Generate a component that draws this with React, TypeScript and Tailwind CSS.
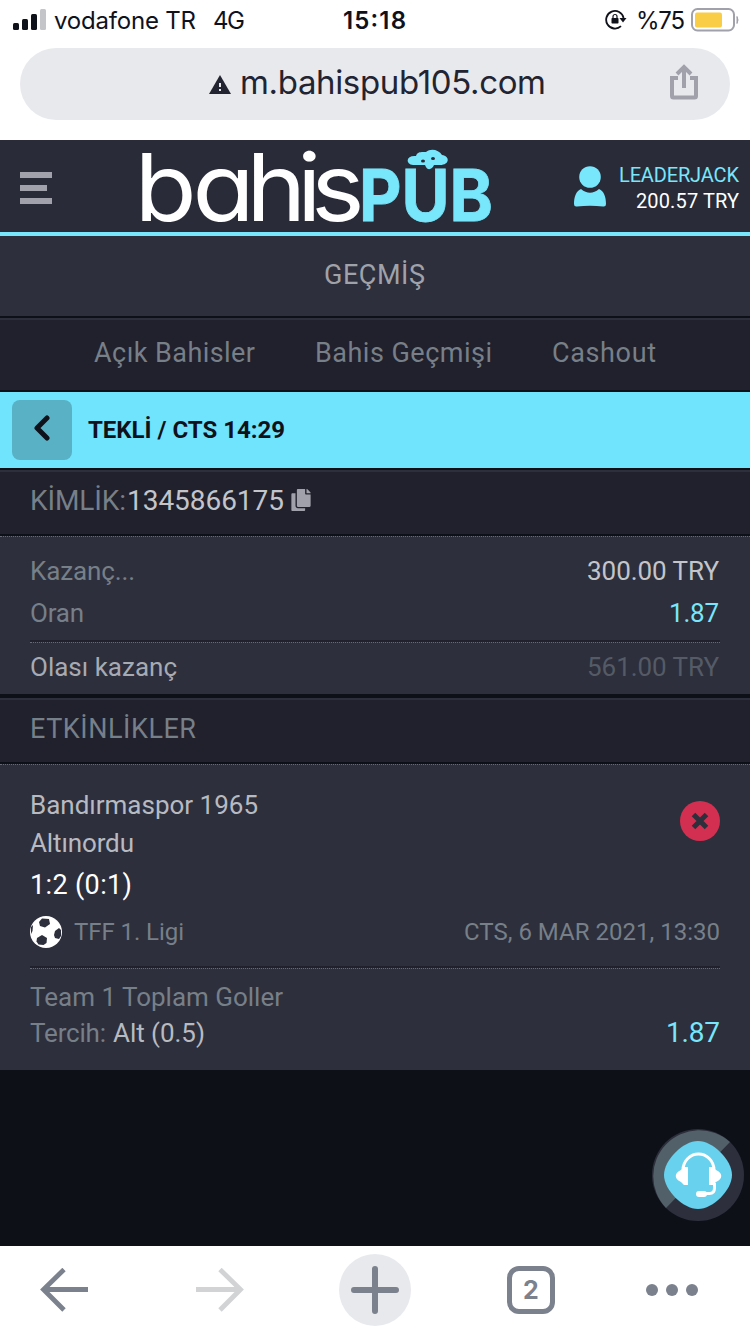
import React from "react";
import { FaCopy } from "react-icons/fa";

const tabs = [
  { id: 1, name: "Açık Bahisler", width: 161 },
  { id: 2, name: "Bahis Geçmişi", width: 177 },
  { id: 3, name: "Cashout", width: 104 },
];

// Single line of text fitted to a fixed width
const Label = ({
  text,
  width,
  size,
  weight = 400,
  font = "Roboto",
}: {
  text: string;
  width: number;
  size: number;
  weight?: number;
  font?: string;
}) => (
  <svg width={width} height={size} className="block shrink-0 overflow-visible">
    <text
      x="0"
      y={size * 0.86}
      fill="currentColor"
      fontFamily={`${font}, sans-serif`}
      fontSize={size}
      fontWeight={weight}
      textLength={width}
    >
      {text}
    </text>
  </svg>
);

const StatusBar = () => (
  <div className="flex h-10 items-center text-[#10121b]">
    <svg width="34" height="22" viewBox="0 0 34 22" className="ml-[13px] shrink-0">
      <rect x="0" y="14" width="6" height="7" rx="1.5" fill="#10121b" />
      <rect x="9" y="10" width="6" height="11" rx="1.5" fill="#10121b" />
      <rect x="18" y="5" width="6" height="16" rx="1.5" fill="#10121b" />
      <rect x="27" y="0" width="6" height="21" rx="1.5" fill="#c4c5c8" />
    </svg>
    <div className="ml-[7px] mt-[-1px]">
      <Label text="vodafone TR" width={142} size={24} font="Inter" />
    </div>
    <div className="ml-[17px] mt-[-1px]">
      <Label text="4G" width={32} size={24} font="Inter" />
    </div>
    <div className="ml-[98px] mt-[-1px]">
      <Label text="15:18" width={63} size={24} weight={600} font="Inter" />
    </div>
    <svg width="22" height="22" viewBox="0 0 22 22" fill="none" className="ml-[199px] shrink-0">
      <path d="M18.6 9A8.8 8.8 0 1 0 16 17.200" stroke="#10121b" strokeWidth="1.8" />
      <path d="M14.500 9h7l-3.500 4.500z" fill="#10121b" />
      <rect x="6.5" y="9" width="7" height="5.5" rx="0.7" fill="#10121b" />
      <path d="M8 9V7.500a2 2 0 0 1 4 0V9" stroke="#10121b" strokeWidth="1.2" />
    </svg>
    <div className="ml-[9px] mt-[-1px]">
      <Label text="%75" width={49} size={24} font="Inter" />
    </div>
    <svg width="48" height="24" viewBox="0 0 48 24" fill="none" className="ml-[6px] mt-[-1px] shrink-0">
      <rect x="1" y="1" width="42" height="21.5" rx="5.5" stroke="#a0a1aa" strokeWidth="2" />
      <rect x="4" y="4.5" width="27" height="15" rx="2" fill="#f9ce46" />
      <path d="M46 8.500q2 3.500 0 7z" fill="#a0a1aa" stroke="#a0a1aa" />
    </svg>
  </div>
);

const AddressBar = () => (
  <div className="mx-5 mt-2 flex h-[72px] items-center rounded-full bg-[#e8e9ed] text-[#222431]">
    <svg width="22" height="20" viewBox="0 0 22 20" className="ml-[189px] mt-[2px] shrink-0">
      <path d="M11 0L22 19H0z" fill="#222431" />
      <path d="M10 8h2v4h-2zM10 14h2v2h-2z" fill="#e8e9ed" />
    </svg>
    <div className="ml-[9px] mt-[-3px]">
      <Label text="m.bahispub105.com" width={306} size={33} font="Inter" />
    </div>
    <svg width="28" height="36" viewBox="0 0 28 36" fill="none" stroke="#a0a1aa" strokeWidth="4" className="ml-[124px] mt-[-5px] shrink-0">
      <path d="M8 14H2v18q0 1.500 1.500 1.500h21Q26 33.500 26 32V14h-6" />
      <path d="M14 24V3M7 10l7-7 7 7" />
    </svg>
  </div>
);

const Logo = () => (
  <svg width="352" height="80" viewBox="0 0 352 80" className="ml-[89px] shrink-0 overflow-visible">
    <text
      x="-7 46.800 96.500 143.500 156.500"
      y="75"
      fill="#fff"
      fontFamily="Inter, sans-serif"
      fontSize="94"
      fontWeight="400"
      transform="scale(1.08 1)"
      style={{ fontFeatureSettings: "'cv11'" }}
    >
      bahis
    </text>
    <text
      x="217"
      y="75"
      fill="#78e6fb"
      stroke="#78e6fb"
      strokeWidth="0.8"
      fontFamily="Inter, sans-serif"
      fontSize="71"
      fontWeight="700"
      textLength="134"
      lengthAdjust="spacingAndGlyphs"
    >
      PUB
    </text>
    <path
      d="M271 19C263 18 264 9 274 10C275 5 281 6 284 6C289 2 297 4 300 9C308 10 308 19 298 19H292C290 24 285 25 283 19Z"
      fill="#78e6fb"
    />
    <ellipse cx="281" cy="15" rx="2" ry="1.5" fill="#292b38" />
    <ellipse cx="291" cy="12.500" rx="2" ry="1.5" fill="#292b38" />
  </svg>
);

const Header = () => (
  <header className="mt-5 flex h-24 items-center border-b-4 border-[#78e6fb] bg-[#292b38]">
    <svg width="33" height="34" viewBox="0 0 33 34" fill="#a0a1aa" className="ml-5 mt-[5px] shrink-0">
      <path d="M0 0h32v6H0zM0 13h27v6H0zM0 26h32v6H0z" />
    </svg>
    <Logo />
    <svg width="32" height="42" viewBox="0 0 32 42" fill="#78e6fb" className="ml-[80px] mt-[2px] shrink-0">
      <circle cx="16" cy="11" r="10.800" />
      <path d="M7 23C13 28 19 28 25 23C30 25 32 31 32 38Q32 41 29 40.500Q16 39 3 40.500Q0 41 0 38C0 31 2 25 7 23Z" />
    </svg>
    <div className="ml-[13px] mt-1 flex flex-col items-end gap-[6px]">
      <div className="text-[#78e6fb]">
        <Label text="LEADERJACK" width={120} size={20} />
      </div>
      <div className="text-white">
        <Label text="200.57 TRY" width={103} size={20} />
      </div>
    </div>
  </header>
);

const Divider = () => (
  <div>
    <div className="h-[2px] bg-[#20212d]" />
    <div className="border-t border-dotted border-[#686a75]" />
  </div>
);

const SoccerBall = () => (
  <svg width="32" height="32" viewBox="0 0 32 32" className="shrink-0">
    <circle cx="16" cy="16" r="16" fill="#fff" />
    <g fill="#2d2f3c">
      <path d="M9 6l3-3.500 7 .5 1 5-5 3.500L10 10z" />
      <path d="M7 22l5-3 5 3-.5 5-3 2-5-.5-2-3z" />
      <path d="M25 15l4-3 2 2v6l-2 3-4-1-1-3z" />
      <path d="M1 11l2-2-.5 6L1 18z" />
    </g>
  </svg>
);

const Support = () => (
  <div className="absolute bottom-6 right-[6px] h-[94px] w-[92px]">
    <svg width="92" height="94" viewBox="0 0 92 94" fill="none">
      <circle cx="46" cy="47" r="46" fill="#2d2f3c" />
      <path d="M14 80A46 46 0 0 1 78 14L46 47z" fill="#526069" />
      <path d="M46 13C61 13 80 32 80 47S61 81 46 81 12 62 12 47 31 13 46 13Z" fill="#67d1ee" />
      <path d="M31 42a15.500 16 0 0 1 31 0M62.500 55v5q0 5.500-5 5.500h-7" stroke="#fff" strokeWidth="3" />
      <path d="M36 39v18h-4l-3-3c-7-3-7-9 0-12l3-3zM57 39v18h4l3-3c7-3 7-9 0-12l-3-3z" fill="#fff" />
      <rect x="44" y="63" width="11" height="6" rx="3" fill="#fff" />
    </svg>
  </div>
);

const BrowserNav = () => (
  <nav className="flex h-[88px] items-center bg-white text-[#7b818d]">
    <svg width="48" height="44" viewBox="0 0 48 44" fill="none" stroke="currentColor" strokeWidth="4.800" className="ml-10 shrink-0">
      <path d="M48 21.500H4M24 1.500L3.500 21.500l20.500 20.500" />
    </svg>
    <svg width="48" height="44" viewBox="0 0 48 44" fill="none" stroke="#d2d3d5" strokeWidth="4.800" className="ml-[108px] shrink-0">
      <path d="M0 21.500h44M24 1.500l20.500 20L24 42" />
    </svg>
    <div className="ml-[95px] flex size-[72px] shrink-0 items-center justify-center rounded-full bg-[#e8e9ed]">
      <svg width="48" height="48" viewBox="0 0 48 48" stroke="currentColor" strokeWidth="6" strokeLinecap="round">
        <path d="M24 3v42M3 24h42" />
      </svg>
    </div>
    <div className="ml-24 flex size-12 shrink-0 items-center justify-center rounded-[12px] border-[5px] border-[#7b818d] pb-[2px] pr-[1px]">
      <Label text="2" width={15} size={25} weight={700} font="Inter" />
    </div>
    <div className="ml-[91px] flex gap-2">
      <div className="size-3 rounded-full bg-[#7b818d]" />
      <div className="size-3 rounded-full bg-[#7b818d]" />
      <div className="size-3 rounded-full bg-[#7b818d]" />
    </div>
  </nav>
);

const App = () => {
  return (
    <div className="flex h-[1334px] w-[750px] flex-col overflow-hidden bg-white font-[Roboto,sans-serif]">
      <StatusBar />
      <AddressBar />
      <Header />
      <main className="relative flex-1 bg-[#0e1018] text-[#777f88]">
        <div className="flex h-20 items-center justify-center bg-[#2d2f3c] pb-1 pr-px text-[#a0a2aa]">
          <Label text="GEÇMİŞ" width={101} size={27} />
        </div>

        {/* Tabs */}
        <div className="mt-[2px] flex h-[72px] items-center gap-[60px] border-t-2 border-[#2d2f3c] bg-[#20212d] pb-1.5 pl-[94px]">
          {tabs.map((tab) => (
            <Label key={tab.id} text={tab.name} width={tab.width} size={27} />
          ))}
        </div>

        {/* Coupon title */}
        <div className="mt-[2px] flex h-[76px] items-center bg-[#70e4fc] pl-3 text-[#10121b]">
          <div className="flex size-[60px] items-center justify-center rounded-lg bg-[#58b1c4]">
            <svg width="16" height="26" viewBox="0 0 16 26" fill="none" stroke="currentColor" strokeWidth="5" strokeLinecap="round" strokeLinejoin="round" className="mb-[4px]">
              <path d="M13 3L3 13l10 10" />
            </svg>
          </div>
          <div className="mb-[2px] ml-4">
            <Label text="TEKLİ / CTS 14:29" width={197} size={24} weight={700} />
          </div>
        </div>

        {/* Coupon id */}
        <div className="mt-[2px] flex h-16 items-center border-t-2 border-[#2d2f3c] bg-[#20212d] pb-1.5 pl-[30px]">
          <Label text="KİMLİK:" width={96} size={28} />
          <div className="ml-px text-[#c3c5cb]">
            <Label text="1345866175" width={157} size={28} />
          </div>
          <FaCopy size={22} className="ml-[6px] text-[#a0a1aa]" />
        </div>

        {/* Stake and winnings */}
        <div className="mt-[2px] h-[158px] border-t border-dotted border-[#686a75] bg-[#2d2f3c] px-[30px]">
          <div className="flex h-[42px] items-center justify-between pt-[26px]">
            <Label text="Kazanç..." width={105} size={26} />
            <div className="mr-px text-[#c3c5cb]">
              <Label text="300.00 TRY" width={132} size={26} />
            </div>
          </div>
          <div className="flex h-[61px] items-center justify-between pt-[7px]">
            <Label text="Oran" width={54} size={26} />
            <div className="mr-px text-[#78e6fb]">
              <Label text="1.87" width={50} size={26} />
            </div>
          </div>
          <Divider />
          <div className="flex h-[48px] items-center justify-between">
            <div className="text-[#a8aab2]">
              <Label text="Olası kazanç" width={147} size={26} />
            </div>
            <div className="mr-px text-[#545b66]">
              <Label text="561.00 TRY" width={132} size={26} />
            </div>
          </div>
        </div>

        <div className="mt-1 flex h-16 items-center border-t-2 border-[#2d2f3c] bg-[#20212d] pb-1.5 pl-[30px]">
          <Label text="ETKİNLİKLER" width={166} size={27} />
        </div>

        {/* Event */}
        <div className="mt-[2px] h-[306px] border-t border-dotted border-[#686a75] bg-[#2d2f3c] px-[30px] pt-[27px]">
          <div className="flex justify-between">
            <div className="text-[#b8bac1]">
              <Label text="Bandırmaspor 1965" width={228} size={26} />
              <div className="mt-3">
                <Label text="Altınordu" width={104} size={26} />
              </div>
              <div className="mt-[15px] text-white">
                <Label text="1:2 (0:1)" width={102} size={27} />
              </div>
            </div>
            <svg width="40" height="40" viewBox="0 0 40 40" className="mt-[9px]">
              <circle cx="20" cy="20" r="20" fill="#d32f50" />
              <path d="M13.500 13.500l13 13M26.500 13.500l-13 13" stroke="#2d2f3c" strokeWidth="5" />
            </svg>
          </div>
          <div className="mt-[18px] flex h-8 items-center justify-between">
            <div className="flex items-center gap-3">
              <SoccerBall />
              <div className="mb-[2px]">
                <Label text="TFF 1. Ligi" width={110} size={24} />
              </div>
            </div>
            <div className="mb-[2px]">
              <Label text="CTS, 6 MAR 2021, 13:30" width={256} size={24} />
            </div>
          </div>
          <div className="mt-[18px]">
            <Divider />
          </div>
          <div className="mt-[15px]">
            <Label text="Team 1 Toplam Goller" width={253} size={26} />
          </div>
          <div className="mt-[8px] flex items-center justify-between">
            <div className="mt-[2px] flex gap-[7px]">
              <Label text="Tercih:" width={76} size={26} />
              <div className="text-[#b8bac1]">
                <Label text="Alt (0.5)" width={92} size={26} />
              </div>
            </div>
            <div className="text-[#78e6fb]">
              <Label text="1.87" width={54} size={28} />
            </div>
          </div>
        </div>
        <Support />
      </main>
      <BrowserNav />
    </div>
  );
};

export default App;
